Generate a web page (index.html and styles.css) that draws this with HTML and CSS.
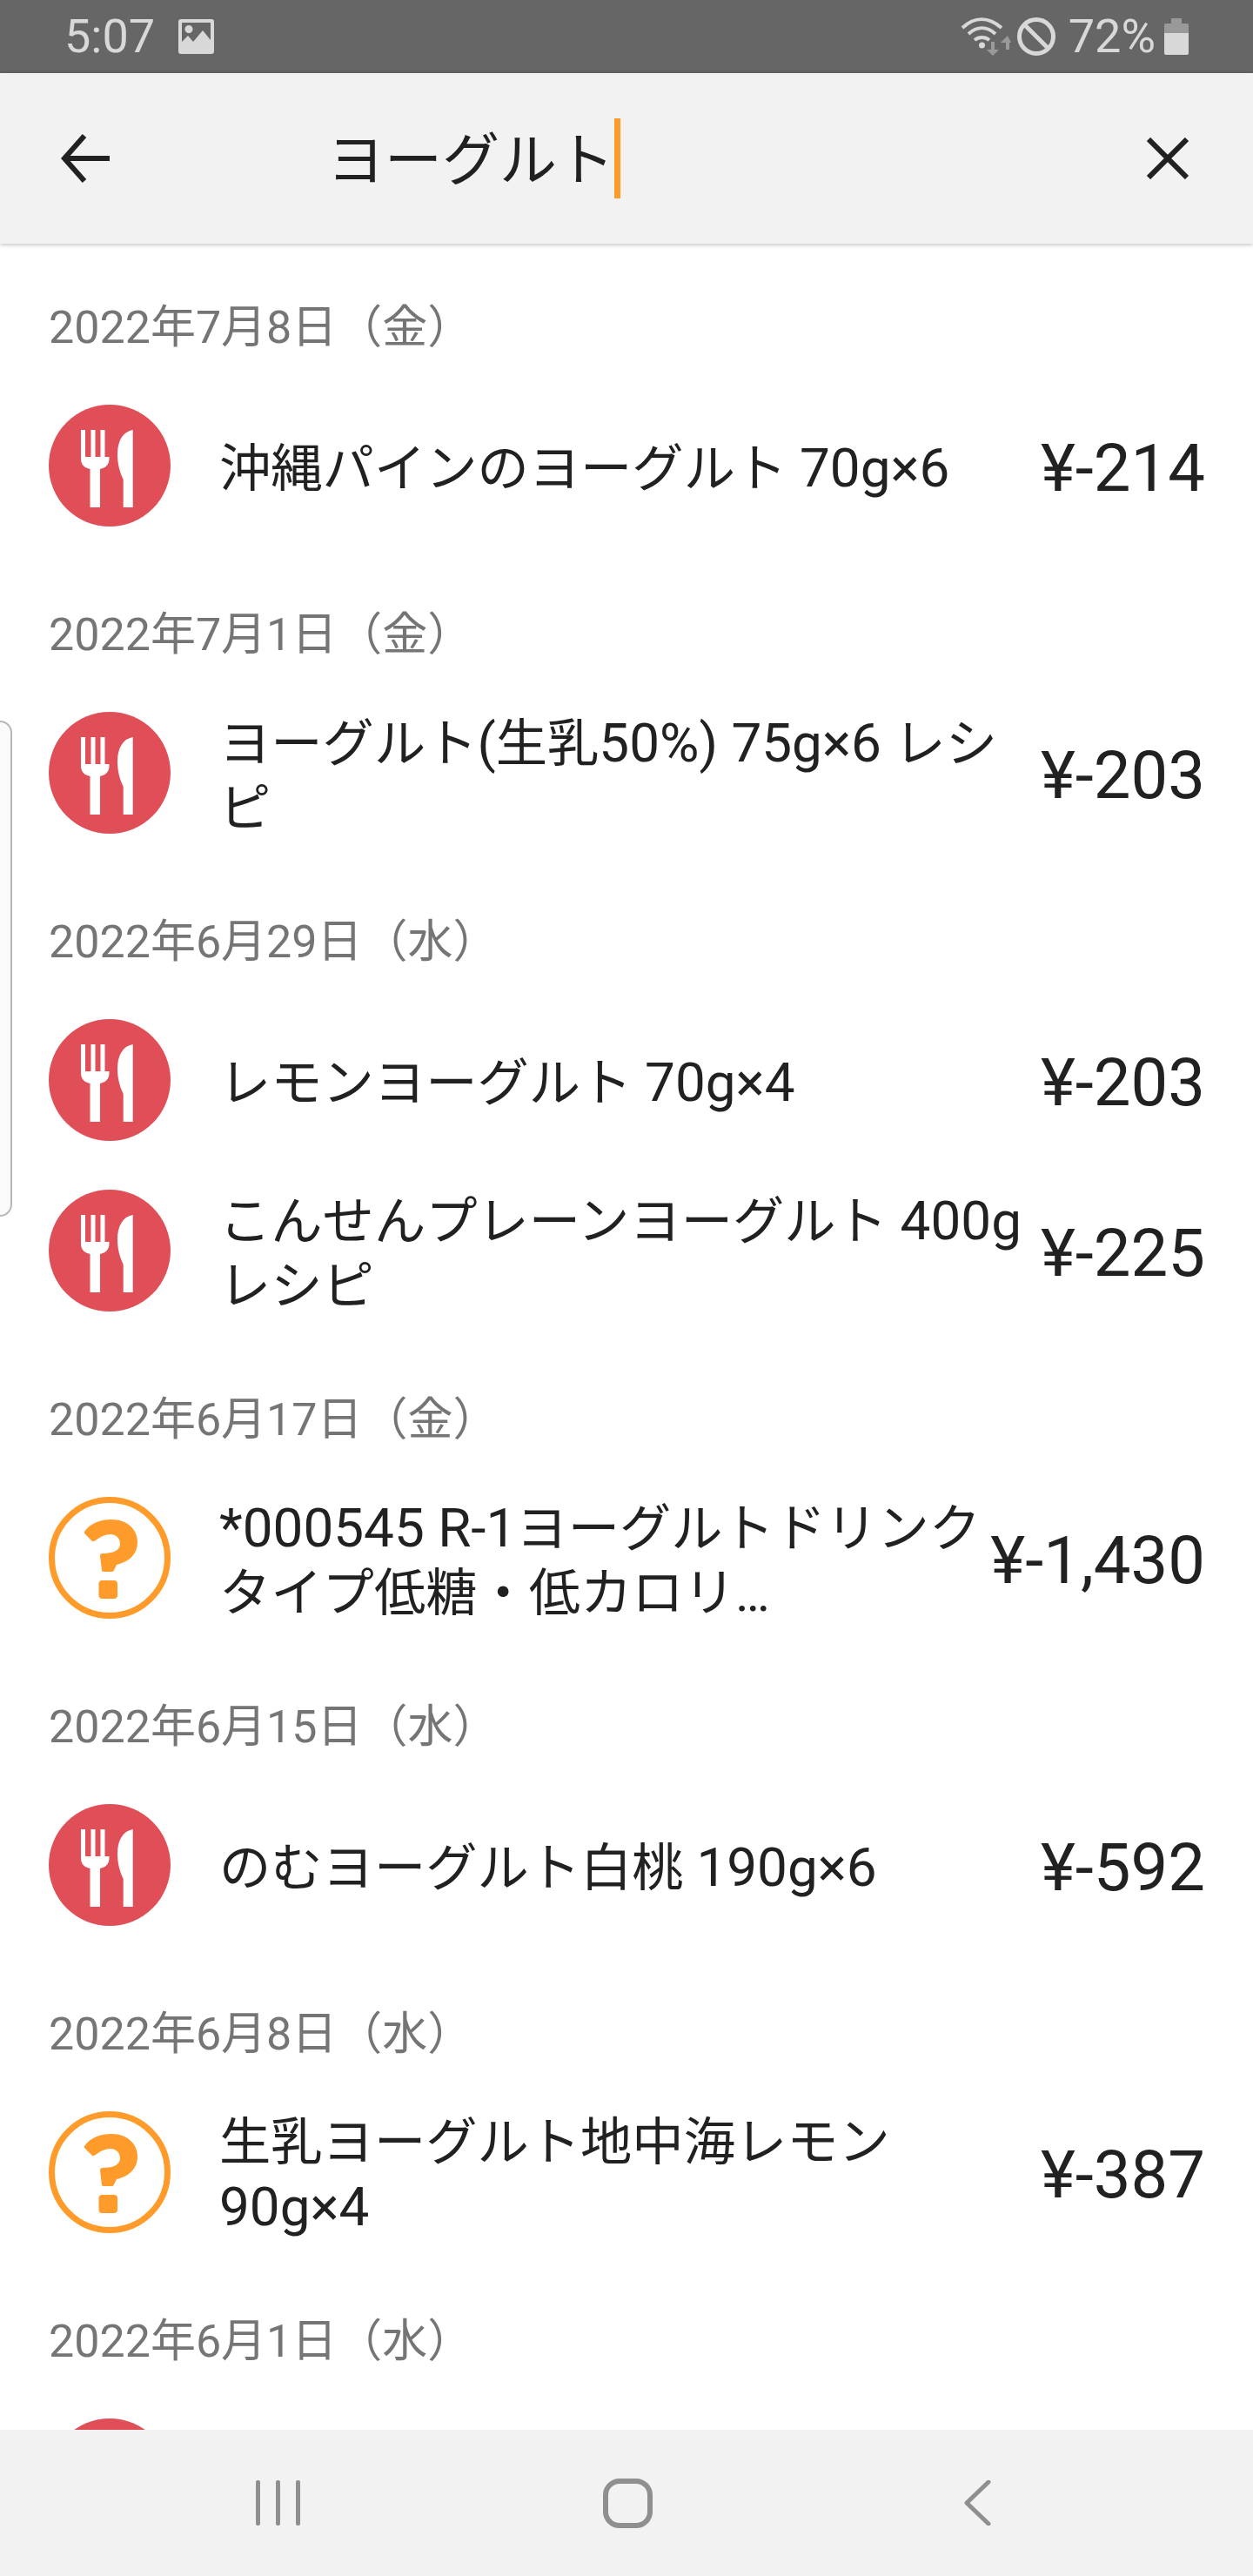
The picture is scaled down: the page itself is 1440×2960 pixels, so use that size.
FILE: index.html
```html
<!DOCTYPE html>
<html lang="ja">
<head>
<meta charset="utf-8">
<title>検索</title>
<link rel="stylesheet" href="styles.css">
</head>
<body>
<svg class="defs" width="0" height="0" aria-hidden="true">
  <symbol id="food" viewBox="0 0 140 140">
    <circle cx="70" cy="70" r="70" fill="#e04f57"/>
    <path fill="#fff" d="M37 29h5v31h6.500V29h5v31H59.500V29h5v31h5V29V62c0 7-4 10.500-10.500 12V118H47.500V74C41 72.500 37 69 37 62Z"/>
    <path fill="#fff" d="M96.700 29V118H85.700V86C81 76 79 67 79 57C79 42 85 31 96.700 29Z"/>
  </symbol>
  <symbol id="unknown" viewBox="0 0 140 140">
    <circle cx="70" cy="70" r="66.500" fill="#fff" stroke="#ff9b2b" stroke-width="7"/>
    <path fill="#ff9b2b" d="M41 40C48 30 60 26 72 26C90 26 102 37 102 52C102 67 91 75 78 78L75 84C74.500 86 73 86 72 86H63C61.500 86 61 85 61 84L59 68C59 66 60 65 62 65C73 65 82 62 82 54C82 47 77 43 71 43C65 43 59 46 54 50C52 51.500 50 51.500 49 50L42 43C41 42 40.500 41 41 40Z"/>
    <rect x="57.500" y="96" width="21.500" height="21" rx="4" fill="#ff9b2b"/>
  </symbol>
</svg>

<div class="screen">
  <div class="status">
    <div class="status-side">
      <span class="clock">5:07</span>
      <svg class="ic-image" viewBox="0 0 41 40"><path fill="#d8d8d8" fill-rule="evenodd" d="M3 0H38a3 3 0 0 1 3 3V37a3 3 0 0 1-3 3H3a3 3 0 0 1-3-3V3a3 3 0 0 1 3-3ZM4 4V26L11 19 17 26 28 13 37 24V4ZM12 7a4.500 4.500 0 1 0 .01 0Z"/></svg>
    </div>
    <div class="status-side status-right">
      <svg class="ic-wifi" viewBox="0 0 58 44">
        <g fill="none" stroke="#d8d8d8" stroke-width="4">
          <path d="M2 12C16 -1 32 -1 47 12"/>
          <path d="M9 19C19 10 30 10 40 19"/>
          <path d="M16 26C21 22 28 22 33 26"/>
        </g>
        <circle cx="24.500" cy="32" r="3.500" fill="#d8d8d8"/>
        <path fill="#9a9a9a" d="M35 28h4v9h5l-7 7-7-7h5ZM52 37h4V29h2L54 21 46 29h6Z"/>
      </svg>
      <svg class="ic-block" viewBox="0 0 44 44"><circle cx="22" cy="22" r="19.500" fill="none" stroke="#d8d8d8" stroke-width="5"/><path d="M8 8L36 36" stroke="#d8d8d8" stroke-width="5"/></svg>
      <span class="pct">72%</span>
      <svg class="ic-batt" viewBox="0 0 28 42"><path fill="#999" d="M8 0H20V6H26a2 2 0 0 1 2 2V17H0V8a2 2 0 0 1 2-2H8Z"/><path fill="#d8d8d8" d="M0 17H28V40a2 2 0 0 1-2 2H2a2 2 0 0 1-2-2Z"/></svg>
    </div>
  </div>

  <header class="search">
    <svg class="ic-back" viewBox="0 0 56 56"><path d="M56 28H5M27 2L4 28L27 54" fill="none" stroke="#212121" stroke-width="6"/></svg>
    <div class="query"><span class="query-text">ヨーグルト</span><i class="caret"></i></div>
    <svg class="ic-close" viewBox="0 0 48 48"><path d="M2 2L46 46M46 2L2 46" fill="none" stroke="#212121" stroke-width="6"/></svg>
  </header>

  <main class="list">
    <section>
      <h2 class="date">2022年7月8日（金）</h2>
      <div class="row"><svg class="badge"><use href="#food"/></svg><p class="name">沖縄パインのヨーグルト <span class="lat">70g×6</span></p><span class="amount">¥-214</span></div>
    </section>
    <section>
      <h2 class="date">2022年7月1日（金）</h2>
      <div class="row"><svg class="badge"><use href="#food"/></svg><p class="name">ヨーグルト<span class="lat">(</span>生乳<span class="lat">50%) 75g×6</span> レシ<br>ピ</p><span class="amount">¥-203</span></div>
    </section>
    <section>
      <h2 class="date">2022年6月29日（水）</h2>
      <div class="row"><svg class="badge"><use href="#food"/></svg><p class="name">レモンヨーグルト <span class="lat">70g×4</span></p><span class="amount">¥-203</span></div>
      <div class="row"><svg class="badge"><use href="#food"/></svg><p class="name">こんせんプレーンヨーグルト <span class="lat">400g</span><br>レシピ</p><span class="amount">¥-225</span></div>
    </section>
    <section>
      <h2 class="date">2022年6月17日（金）</h2>
      <div class="row"><svg class="badge"><use href="#unknown"/></svg><p class="name"><span class="lat">*000545 R-1</span>ヨーグルトドリンク<br>タイプ低糖・低カロリ…</p><span class="amount">¥-1,430</span></div>
    </section>
    <section>
      <h2 class="date">2022年6月15日（水）</h2>
      <div class="row"><svg class="badge"><use href="#food"/></svg><p class="name">のむヨーグルト白桃 <span class="lat">190g×6</span></p><span class="amount">¥-592</span></div>
    </section>
    <section>
      <h2 class="date">2022年6月8日（水）</h2>
      <div class="row"><svg class="badge"><use href="#unknown"/></svg><p class="name">生乳ヨーグルト地中海レモン<br><span class="lat">90g×4</span></p><span class="amount">¥-387</span></div>
    </section>
    <section>
      <h2 class="date">2022年6月1日（水）</h2>
      <div class="row"><svg class="badge"><use href="#food"/></svg></div>
    </section>
  </main>

  <nav class="navbar">
    <svg class="ic-recent" viewBox="0 0 51 52"><path fill="#8f8f8f" d="M2 0h1a2 2 0 0 1 2 2V50a2 2 0 0 1-2 2H2a2 2 0 0 1-2-2V2a2 2 0 0 1 2-2ZM25 0h1a2 2 0 0 1 2 2V50a2 2 0 0 1-2 2H25a2 2 0 0 1-2-2V2a2 2 0 0 1 2-2ZM48 0h1a2 2 0 0 1 2 2V50a2 2 0 0 1-2 2H48a2 2 0 0 1-2-2V2a2 2 0 0 1 2-2Z"/></svg>
    <svg class="ic-home" viewBox="0 0 57 57"><rect x="3" y="3" width="51" height="51" rx="16" fill="none" stroke="#8f8f8f" stroke-width="6"/></svg>
    <svg class="ic-nav-back" viewBox="0 0 31 52"><path d="M28 2L3 26L28 50" fill="none" stroke="#8f8f8f" stroke-width="5" stroke-linecap="round" stroke-linejoin="round"/></svg>
  </nav>

  <div class="edge-handle"></div>
</div>
</body>
</html>
```

FILE: styles.css
```css
* { box-sizing: border-box; }

html, body {
  margin: 0;
  padding: 0;
  background: #fff;
}

.defs { position: absolute; }

.screen {
  position: relative;
  display: flex;
  flex-direction: column;
  width: 1440px;
  height: 2960px;
  overflow: hidden;
  font-family: Roboto, "Noto Sans CJK JP", sans-serif;
  color: #212121;
}

/* status bar */
.status {
  flex: none;
  display: flex;
  justify-content: space-between;
  height: 84px;
  padding: 0 74px 0 74px;
  background: #666;
  color: #d8d8d8;
}
.status-side {
  display: flex;
  align-items: center;
}
.clock {
  font-size: 54px;
  line-height: 86px;
}
.ic-image {
  width: 41px;
  height: 40px;
  margin-left: 27px;
}
.ic-wifi {
  width: 58px;
  height: 44px;
}
.ic-block {
  width: 44px;
  height: 44px;
  margin-left: 7px;
}
.pct {
  margin-left: 15px;
  font-size: 54px;
  line-height: 86px;
}
.ic-batt {
  width: 28px;
  height: 42px;
  margin-left: 10px;
}

/* search bar */
.search {
  flex: none;
  position: relative;
  z-index: 1;
  display: flex;
  align-items: center;
  height: 196px;
  padding: 0 74px 0 70px;
  background: #f2f2f2;
  box-shadow: 0 1px 5px rgba(0, 0, 0, .28);
}
.ic-back {
  width: 56px;
  height: 56px;
}
.query {
  flex: 1;
  display: flex;
  align-items: center;
  margin-left: 250px;
  font-size: 66px;
  line-height: 92px;
}
.query-text {
  padding-top: 6px;
}
.caret {
  width: 7px;
  height: 92px;
  background: #ff9b2b;
}
.ic-close {
  width: 48px;
  height: 48px;
}

/* list */
.list {
  flex: 1;
  min-height: 0;
  overflow: hidden;
}
.date {
  height: 157px;
  margin: 0;
  padding: 60px 0 0 56px;
  font-size: 52px;
  font-weight: 400;
  line-height: 74px;
  color: #757575;
}
.row {
  display: flex;
  align-items: center;
  height: 196px;
  padding: 0 55px 0 56px;
}
.badge {
  flex: none;
  width: 140px;
  height: 140px;
}
.name {
  flex: 1;
  min-width: 0;
  margin: 0 4px 0 56px;
  padding-top: 7px;
  font-size: 59.3px;
  line-height: 74px;
}
.lat {
  font-size: 62px;
}
.amount {
  flex: none;
  padding-top: 6px;
  font-size: 76px;
  line-height: 90px;
}

/* bottom navigation */
.navbar {
  flex: none;
  position: relative;
  z-index: 1;
  display: flex;
  align-items: center;
  height: 168px;
  background: #f2f2f2;
}
.ic-recent {
  width: 51px;
  height: 52px;
  margin-left: 294px;
}
.ic-home {
  width: 57px;
  height: 57px;
  margin-left: 348px;
}
.ic-nav-back {
  width: 31px;
  height: 52px;
  margin-left: 358px;
}

/* edge panel handle */
.edge-handle {
  position: absolute;
  left: -4px;
  top: 828px;
  width: 18px;
  height: 570px;
  border: 2px solid #b8b8b8;
  border-radius: 0 14px 14px 0;
  background: #fafafa;
}
```
